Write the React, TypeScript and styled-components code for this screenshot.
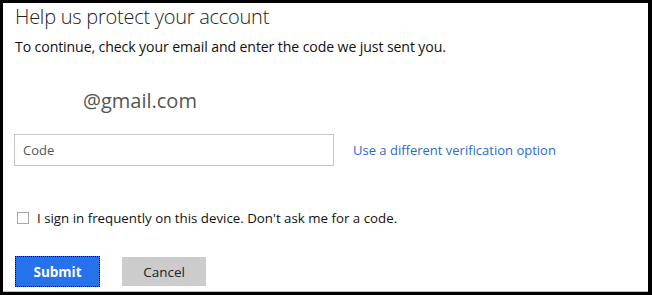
import React from "react";
import styled, { createGlobalStyle } from "styled-components";

const Global = createGlobalStyle`
  html, body { margin: 0; padding: 0; background: #000; }
  * { box-sizing: border-box; }
`;

const Frame = styled.div`
  width: 652px;
  height: 295px;
  background: #000;
  padding: 3px 4px 3px 3px;
  display: flex;
`;

const Panel = styled.div`
  flex: 1;
  background: #fff;
  border-bottom: 1px solid #c4c4c4;
  padding: 0 0 0 12px;
  display: flex;
  flex-direction: column;
  font-family: "Open Sans", "Noto Sans", sans-serif;
  color: #222;
`;

const Title = styled.h1`
  margin: 0;
  padding-top: 1px;
  font-size: 20px;
  font-weight: 300;
  line-height: 26px;
  color: #222;
  letter-spacing: -0.25px;
`;

const Intro = styled.p`
  margin: 8px 0 0;
  font-size: 14.1px;
  line-height: 18px;
  color: #111;
  letter-spacing: -0.1px;
`;

const Email = styled.div`
  margin: 32px 0 0 68px;
  font-size: 20px;
  line-height: 26px;
  color: #555;
  font-weight: 400;
`;

const CodeRow = styled.div`
  margin-top: 20px;
  display: flex;
  align-items: center;
  gap: 19px;
`;

const CodeInput = styled.input`
  width: 320px;
  height: 32px;
  margin-left: -1px;
  border: 1px solid #c5c5c5;
  padding: 0 8px;
  font-family: inherit;
  font-size: 13px;
  color: #222;
  outline: none;
  &::placeholder { color: #555; }
`;

const Link = styled.a`
  font-size: 13px;
  color: #2a6acf;
  text-decoration: none;
  margin-top: -1px;
`;

const CheckRow = styled.label`
  margin-top: 43px;
  display: flex;
  align-items: center;
  gap: 8px;
  font-size: 13.3px;
  color: #111;
  padding-left: 2px;
`;

const Box = styled.span`
  width: 12px;
  height: 12px;
  border: 1px solid #a8a8a8;
  background: #fff;
  display: inline-block;
`;

const Buttons = styled.div`
  margin-top: 29px;
  display: flex;
  align-items: center;
  gap: 22px;
`;

const Button = styled.button<{ $primary?: boolean }>`
  width: ${(p) => (p.$primary ? "85px" : "84px")};
  height: ${(p) => (p.$primary ? "31px" : "29px")};
  border: ${(p) => (p.$primary ? "1px dotted #000" : "none")};
  background: ${(p) => (p.$primary ? "#2672ec" : "#cccccc")};
  color: ${(p) => (p.$primary ? "#fff" : "#222")};
  font-family: inherit;
  font-weight: ${(p) => (p.$primary ? 700 : 400)};
  font-size: 13.5px;
  padding: 0;
`;

export default function App() {
  return (
    <>
      <Global />
      <Frame>
        <Panel>
          <Title>Help us protect your account</Title>
          <Intro>To continue, check your email and enter the code we just sent you.</Intro>
          <Email>@gmail.com</Email>
          <CodeRow>
            <CodeInput placeholder="Code" />
            <Link href="#">Use a different verification option</Link>
          </CodeRow>
          <CheckRow>
            <Box />
            I sign in frequently on this device. Don't ask me for a code.
          </CheckRow>
          <Buttons>
            <Button $primary>Submit</Button>
            <Button>Cancel</Button>
          </Buttons>
        </Panel>
      </Frame>
    </>
  );
}
